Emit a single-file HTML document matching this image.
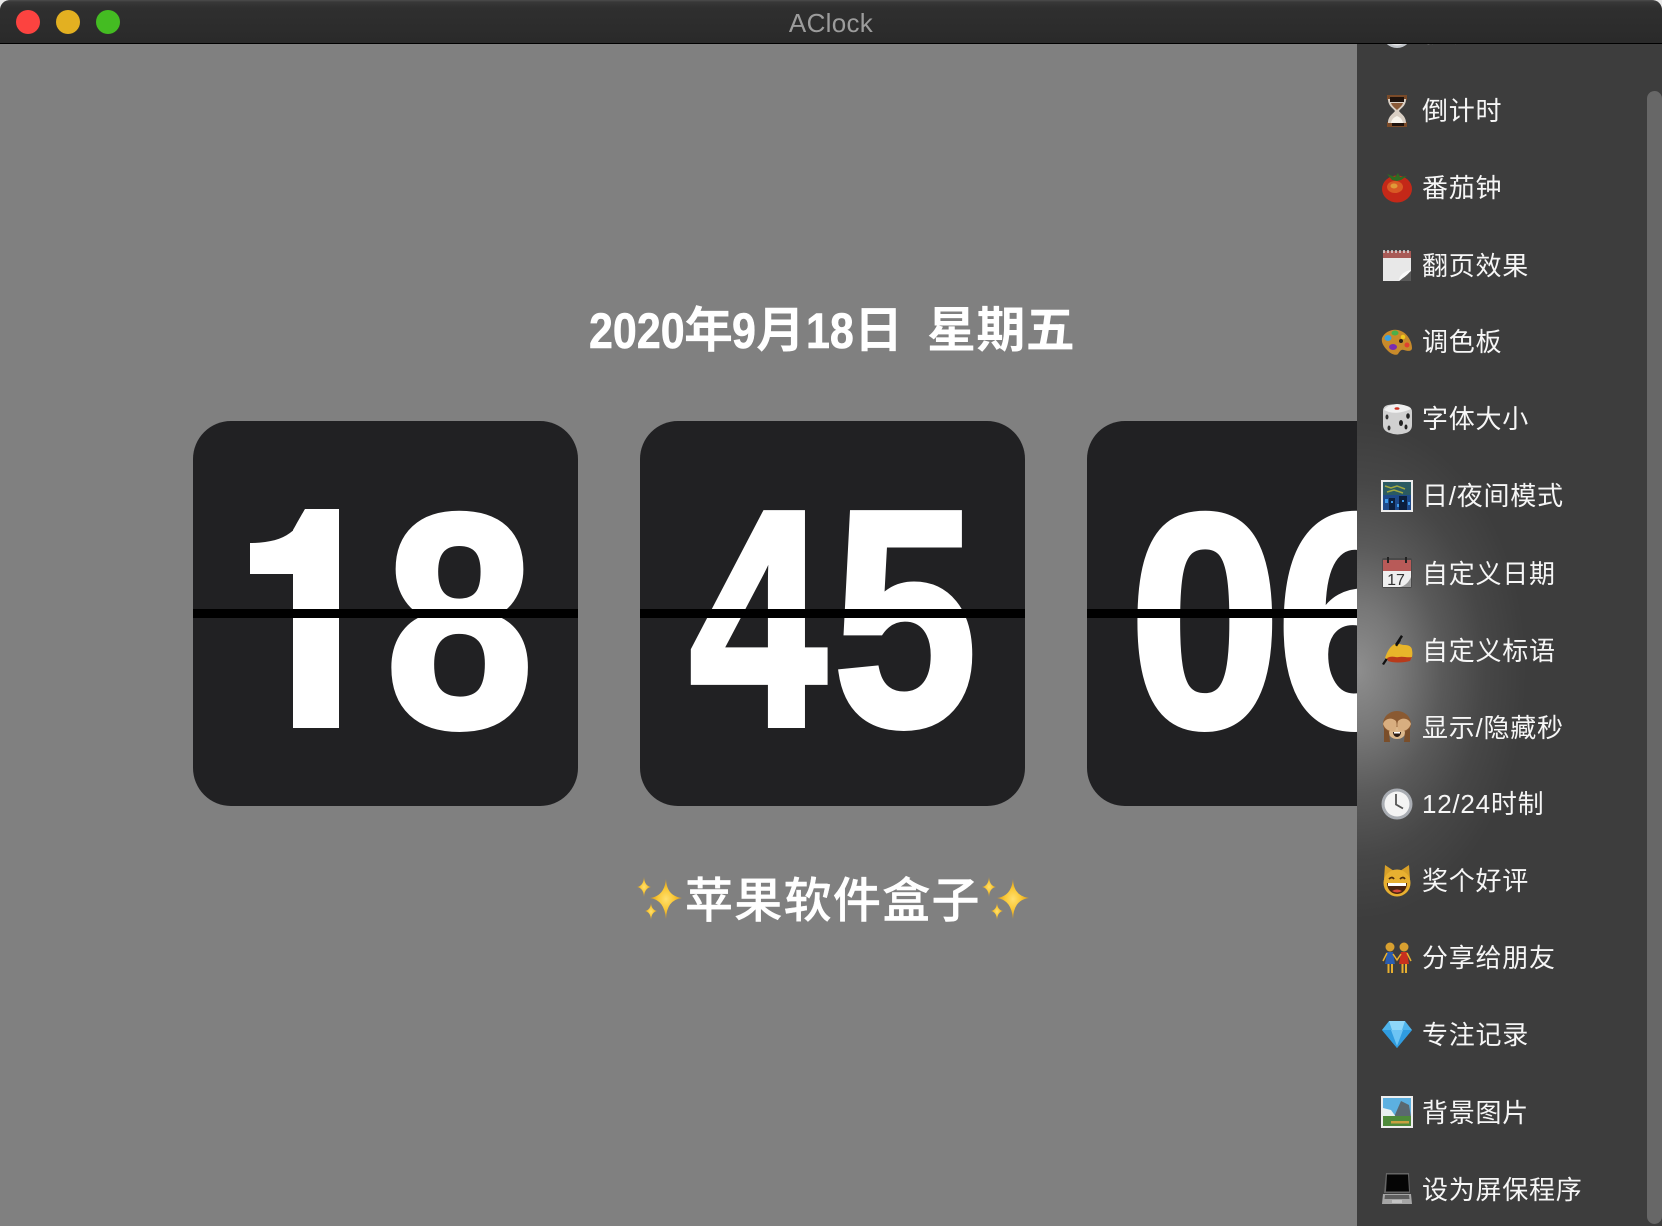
<!DOCTYPE html>
<html><head><meta charset="utf-8"><title>AClock</title>
<style>
html,body{margin:0;padding:0;width:1662px;height:1226px;overflow:hidden;background:#e8e8e8}
#w{position:absolute;left:0;top:0;width:1662px;height:1226px;overflow:hidden;background:#808080;border-radius:10px 10px 0 0}
#tb{position:absolute;left:0;top:0;width:1662px;height:43px;background:linear-gradient(#4c4c4c 0,#383838 2px,#2f2f2f 8px,#2a2a2a 42px);border-bottom:1px solid #000;z-index:5}
.l{position:absolute;top:10px;width:24px;height:24px;border-radius:50%}
#t{position:absolute;left:0;width:1662px;top:6px;text-align:center;font:26px/34px "Liberation Sans",sans-serif;color:#9c9c9c;letter-spacing:.3px}
.c{position:absolute;top:421px;width:385px;height:385px;background:#212123;border-radius:38px}
.d{position:absolute;left:0;top:0}
.ln{position:absolute;top:609px;height:9px;background:#000}
.ds{position:absolute;font:700 49px/60px "Liberation Sans","Noto Sans CJK SC",sans-serif;color:#fff;top:301px;white-space:pre}
.n{font-size:50px;transform:scaleX(.86);transform-origin:0 50%;-webkit-text-stroke:.6px #fff}
.tg{position:absolute;top:867px;font:500 48px/70px "Liberation Sans","Noto Sans CJK SC",sans-serif;color:#fff;white-space:pre;letter-spacing:1.3px;-webkit-text-stroke:.4px #fff}
#s{position:absolute;left:1357px;top:44px;width:305px;height:1182px;overflow:hidden;background:#3d3d3d}
#gl{position:absolute;left:-170px;top:376px;width:340px;height:500px;background:radial-gradient(closest-side,rgba(255,255,255,.42) 0,rgba(255,255,255,.30) 25%,rgba(255,255,255,.15) 50%,rgba(255,255,255,.05) 75%,rgba(255,255,255,0) 100%)}
#sb{position:absolute;left:290px;top:47px;width:15px;height:1133px;background:#676767;border-radius:8px}
.r{position:absolute;left:65px;font:26px/36px "Liberation Sans","Noto Sans CJK SC",sans-serif;color:#f6f6f6;white-space:pre;letter-spacing:.75px}
.i{position:absolute;left:24px;width:32px;height:32px}
</style></head><body>
<div id="w">
<div class="c" style="left:193px"></div>
<div class="c" style="left:640px"></div>
<div class="c" style="left:1087px"></div>
<svg class="d" width="1662" height="1226" font-family="'Liberation Sans',sans-serif" font-weight="700" font-size="308" fill="#fff" stroke="#fff" stroke-width="6" stroke-linejoin="miter">
<defs><clipPath id="one"><path d="M305 509H339V728H293V530Z"/></clipPath></defs>
<g clip-path="url(#one)"><text transform="translate(312,725) scale(.98,1)" text-anchor="middle" stroke-width="14">1</text></g>
<path d="M305 509C300 530 285 543 250 543V574H294V530Z" stroke="none"/>
<text transform="translate(459.500,726) scale(.875,1)" text-anchor="middle" font-size="304">8</text>
<text transform="translate(758,725) scale(.8,1)" text-anchor="middle">4</text>
<text transform="translate(905,725) scale(.84,1)" text-anchor="middle">5</text>
<text transform="translate(1205,726) scale(.895,1)" text-anchor="middle" font-size="304">0</text>
<text transform="translate(1352,726) scale(.895,1)" text-anchor="middle" font-size="304">6</text>
</svg>
<div class="ln" style="left:193px;width:385px"></div>
<div class="ln" style="left:640px;width:385px"></div>
<div class="ln" style="left:1087px;width:385px"></div>

<span class="ds n" style="left:589px">2020</span>
<span class="ds" style="left:684px">年</span>
<span class="ds n" style="left:732px">9</span>
<span class="ds" style="left:756px">月</span>
<span class="ds n" style="left:806px">18</span>
<span class="ds" style="left:854px">日</span>
<span class="ds" style="left:927px;letter-spacing:.4px">星期五</span>

<svg class="d" width="1662" height="1226">
<defs><radialGradient id="sp" cx=".5" cy=".5" r=".5"><stop offset="0" stop-color="#ffe070"/><stop offset=".5" stop-color="#fac836"/><stop offset="1" stop-color="#d89818"/></radialGradient></defs>
<g fill="url(#sp)">
<path d="M666 879Q666.500 896 682 898Q666.500 900 666 919Q664.500 900 650 898Q664.500 896 666 879Z"/>
<path d="M644 877Q644.500 886 651 887Q644.500 888 644 897Q643.500 888 637 887Q643.500 886 644 877Z"/>
<path d="M651 903Q651.500 910 657 911Q651.500 912 651 920Q650.500 912 645 911Q650.500 910 651 903Z"/>
<path d="M1013 879Q1013.500 896 1029 898Q1013.500 900 1013 919Q1011.500 900 997 898Q1011.500 896 1013 879Z"/>
<path d="M989 877Q989.500 886 996 887Q989.500 888 989 897Q988.500 888 982 887Q988.500 886 989 877Z"/>
<path d="M997 903Q997.500 910 1003 911Q997.500 912 997 920Q996.500 912 991 911Q996.500 910 997 903Z"/>
</g></svg>
<span class="tg" style="left:685px">苹果软件盒子</span>

<div id="s">
<div id="gl"></div>
<div id="sb"></div>
<svg class="i" style="top:-27px" viewBox="0 0 32 32"><circle cx="16" cy="16" r="15" fill="#bfc3c8"/><circle cx="16" cy="16" r="12.500" fill="#e6e6e6"/></svg>
<div class="r" style="top:-29px">秒表</div>

<svg class="i" style="top:51px" viewBox="0 0 32 32"><path d="M6 0h20v5H6zM6 27h20v5H6z" fill="#7a4a28"/><path d="M7 4h18c0 7-5 9-7 12 2 3 7 5 7 12H7c0-7 5-9 7-12C12 13 7 11 7 4z" fill="#d9cfc4"/><path d="M9 2h14v5H9zM11 28h12v3H11z" fill="#1e120c"/><path d="M10 28c1-5 4-6 6-7 2 1 5 2 6 7z" fill="#f8f4ec"/><path d="M10 8h12c-1 3-4 5-6 7-2-2-5-4-6-7z" fill="#8a5a38"/></svg>
<div class="r" style="top:49px">倒计时</div>

<svg class="i" style="top:127px" viewBox="0 0 32 32"><ellipse cx="16" cy="18" rx="15" ry="13.500" fill="#c42818"/><ellipse cx="14" cy="16" rx="8" ry="6" fill="#d85a24"/><ellipse cx="13" cy="15" rx="3.500" ry="2.500" fill="#e09a38"/><path d="M6 3l8 3 3-4 2 4 7-1-6 4-4 1-5-1z" fill="#2f6b22"/></svg>
<div class="r" style="top:126px">番茄钟</div>

<svg class="i" style="top:206px" viewBox="0 0 32 32"><path d="M2 1h28v30H2z" fill="#e8e8e8"/><path d="M2 1h28v7H2z" fill="#a85a56"/><path d="M3 0v3M7 0v3M11 0v3M15 0v3M19 0v3M23 0v3M27 0v3" stroke="#ddd" stroke-width="1.500"/><path d="M30 21L18 31h12z" fill="#5a5a5a"/><path d="M30 20c-3 5-7 7-12 11 0-6 6-10 12-11z" fill="#fafafa"/></svg>
<div class="r" style="top:204px">翻页效果</div>

<svg class="i" style="top:282px" viewBox="0 0 32 32"><path d="M1 12C4 5 14 1 22 6c5 3 9 10 9 16 0 4-5 3-8 2-3-1-4 1-6 4-2 2-7 0-10-3C3 21 0 17 1 12z" fill="#c88a2a"/><ellipse cx="7" cy="12" rx="3.500" ry="3" fill="#3aa0e0"/><ellipse cx="14" cy="7" rx="3.500" ry="2.500" fill="#4ab04a"/><circle cx="22" cy="11" r="2.300" fill="#f0c81e"/><ellipse cx="12" cy="21" rx="4" ry="3" fill="#7a2ab0"/><circle cx="26" cy="19" r="2.500" fill="#e04030"/><circle cx="20" cy="15" r="2" fill="#2a2018"/></svg>
<div class="r" style="top:280px">调色板</div>

<svg class="i" style="top:359px" viewBox="0 0 32 32"><path d="M7 2Q16 0 26 3Q31 4 31 9V22Q31 28 25 30Q16 33 9 30Q2 28 2 22V8Q2 3 7 2Z" fill="#d0d0d0"/><path d="M3 7Q14 13 30 6Q27 2 16 1Q6 2 3 7Z" fill="#f0f0f0"/><ellipse cx="16" cy="5.500" rx="2.500" ry="1.300" fill="#d03020"/><ellipse cx="27" cy="13" rx="1.800" ry="2.800" fill="#222"/><ellipse cx="20" cy="20" rx="2" ry="3" fill="#222"/><ellipse cx="25" cy="24" rx="1.500" ry="2.500" fill="#222"/><ellipse cx="6" cy="14" rx="1.500" ry="2.500" fill="#333"/><ellipse cx="8" cy="25" rx="1.500" ry="2.500" fill="#333"/></svg>
<div class="r" style="top:357px">字体大小</div>

<svg class="i" style="top:436px" viewBox="0 0 32 32"><rect x="0" y="0" width="32" height="32" fill="#ececec"/><rect x="2" y="2" width="28" height="28" fill="#1e4a8a"/><path d="M2 2h28v13H2z" fill="#2a5a62"/><path d="M4 6l6 2 6-2 8 3M6 12l7-2 9 3" stroke="#a0a840" stroke-width="1.500" fill="none"/><path d="M8 18h6v12H8zM18 16h8v14h-8z" fill="#0c1f3c"/><path d="M4 19h3v4H4zM10 21h2v2h-2zM21 20h2v2h-2zM16 24h2v3h-2zM27 22h2v3h-2z" fill="#3c98e8"/></svg>
<div class="r" style="top:434px">日/夜间模式</div>

<svg class="i" style="top:513px" viewBox="0 0 32 32"><rect x="1" y="1" width="30" height="30" rx="2" fill="#4a4a4a"/><rect x="2" y="3" width="28" height="11" fill="#b85a58"/><rect x="2" y="14" width="28" height="16" fill="#efefef"/><path d="M7 0v6M25 0v6" stroke="#222" stroke-width="2"/><path d="M30 20v10H19c5-1 9-5 11-10z" fill="#999"/><text x="15" y="28" font-family="'Liberation Sans',sans-serif" font-size="16" text-anchor="middle" fill="#333">17</text></svg>
<div class="r" style="top:512px">自定义日期</div>

<svg class="i" style="top:590px" viewBox="0 0 32 32"><path d="M1 30L20 1l2 1.500L3 31z" fill="#111"/><path d="M4 24C6 18 9 12 14 10C18 9 20 11 24 11C28 11 31 13 31 16C32 20 31 25 29 26C22 28 12 28 8 26Z" fill="#e8b52a"/><path d="M6 24C12 21 14 24 18 23C22 22 26 24 31 23L29 27C22 29 12 29 7 27Z" fill="#b83a1a"/><path d="M14 11L18 5l2 1.500-4 6z" fill="#111"/></svg>
<div class="r" style="top:589px">自定义标语</div>

<svg class="i" style="top:667px" viewBox="0 0 32 32"><ellipse cx="16" cy="13" rx="14" ry="13" fill="#8a5a32"/><ellipse cx="16" cy="22" rx="8" ry="6" fill="#dcb88c"/><path d="M2 13c2-6 9-7 13-3 1 3 1 7-1 10-6 1-10-2-12-7zM30 13c-2-6-9-7-13-3-1 3-1 7 1 10 6 1 10-2 12-7z" fill="#d8ae80"/><path d="M12 21h8c0 3-2 5-4 5s-4-2-4-5z" fill="#2a1a12"/><path d="M13 21h6v1.500h-6z" fill="#fff"/><path d="M3 17l5 4 1 10H3zM29 17l-5 4-1 10h6z" fill="#7a4e2a"/></svg>
<div class="r" style="top:666px">显示/隐藏秒</div>

<svg class="i" style="top:744px" viewBox="0 0 32 32"><circle cx="16" cy="16" r="15.500" fill="#a9adb3"/><circle cx="16" cy="16" r="12.500" fill="#f4f4f4"/><path d="M15 6v10.500l7 4" stroke="#555" stroke-width="1.800" fill="none"/></svg>
<div class="r" style="top:742px">12/24时制</div>

<svg class="i" style="top:821px" viewBox="0 0 32 32"><path d="M4 0l9 6h6l9-6 1 14H3z" fill="#d8a028"/><circle cx="16" cy="18" r="13.500" fill="#e8b030"/><path d="M8 14q3-3 5 0M19 14q3-3 5 0" stroke="#4a2a10" stroke-width="1.800" fill="none"/><path d="M6 18h20c0 7-5 11-10 11S6 25 6 18z" fill="#4a2410"/><path d="M7 18h18v3H7z" fill="#fff"/><path d="M11 26q5 3 10 0-5-3-10 0z" fill="#d84a3a"/></svg>
<div class="r" style="top:819px">奖个好评</div>

<svg class="i" style="top:898px" viewBox="0 0 32 32"><circle cx="9" cy="5" r="4.500" fill="#d8a030"/><circle cx="23" cy="5" r="4.500" fill="#d8a030"/><path d="M6 10h6l2 12H4z" fill="#2a5cb0"/><path d="M20 10h6l2 12H18z" fill="#c8301e"/><path d="M6.500 22h2v9h-2zM10 22h2v9h-2zM20.500 22h2v9h-2zM24 22h2v9h-2z" fill="#e8b030"/><path d="M12 12l4 6 4-6M6 11l-4 8M26 11l4 8" stroke="#e8b030" stroke-width="1.500" fill="none"/></svg>
<div class="r" style="top:896px">分享给朋友</div>

<svg class="i" style="top:974px" viewBox="0 0 32 32"><path d="M8 3h16l7 9-15 18L1 12z" fill="#4eb4ec"/><path d="M1 12h30L16 30z" fill="#2f9ce0"/><path d="M10 12h12l-6 16z" fill="#6cc4f4"/><path d="M8 3h16l-3 9H11z" fill="#8ed8fa"/></svg>
<div class="r" style="top:973px">专注记录</div>

<svg class="i" style="top:1052px" viewBox="0 0 32 32"><rect width="32" height="32" fill="#eee"/><rect x="2" y="2" width="28" height="28" fill="#5cb0e0"/><path d="M13 21L20 5l8 4 2 12z" fill="#5a6870"/><path d="M2 12l8 2 5 7H2z" fill="#e8f0f0"/><path d="M2 20h28v10H2z" fill="#4e8a3a"/><path d="M10 25h18v2.500H10z" fill="#c8a040"/></svg>
<div class="r" style="top:1051px">背景图片</div>

<svg class="i" style="top:1129px" viewBox="0 0 32 32"><path d="M5 0h23l1 20H3z" fill="#666"/><path d="M6 1.500h21l1 17H5z" fill="#050505"/><path d="M2 21h28l1 10H1z" fill="#a6a6a6"/><path d="M4 22h24l.5 4h-25z" fill="#5e5e5e"/><rect x="11" y="27" width="10" height="3" fill="#c4c4c4"/></svg>
<div class="r" style="top:1128px">设为屏保程序</div>
</div>

<div id="tb">
<div class="l" style="left:16px;background:#fc4340"></div>
<div class="l" style="left:56px;background:#e3b021"></div>
<div class="l" style="left:96px;background:#44bc22"></div>
<div id="t">AClock</div>
</div>
</div>
</body></html>
